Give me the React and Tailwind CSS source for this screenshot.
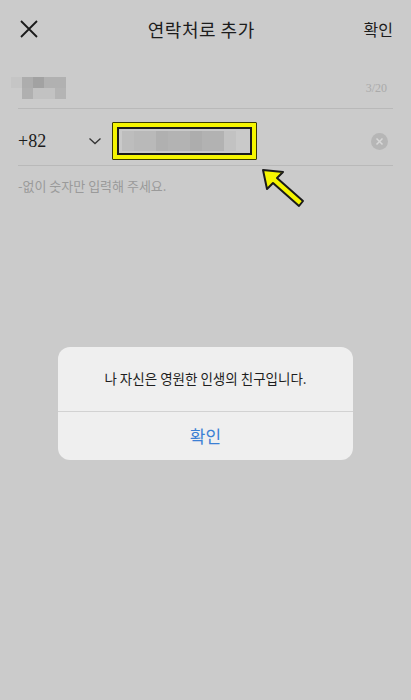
export default function App() {
  const sans = { fontFamily: '"Noto Sans CJK KR", "Noto Sans", sans-serif' };
  const serif = { fontFamily: '"Liberation Serif", "Times New Roman", serif' };

  return (
    <div className="relative min-h-[700px] w-full bg-[#cbcbcb] text-[#1c1c1c]" style={sans}>
      {/* header */}
      <header className="flex h-[58px] items-center justify-between px-[18px]">
        <svg width="20" height="20" viewBox="0 0 20 20" className="ml-[1px]">
          <path d="M2 2 L18 18 M18 2 L2 18" stroke="#1a1a1a" strokeWidth="1.8" />
        </svg>
        <h1 className="text-[18px] font-normal tracking-[0.5px]">연락처로 추가</h1>
        <button className="text-[16px]">확인</button>
      </header>

      {/* name row */}
      <div className="mx-[18px] flex h-[51px] items-center justify-between border-b border-[#b9b9b9] pt-[9px]">
        <div className="-ml-[7px] flex flex-col">
          <div className="flex h-[11px]">
            <span className="w-[11px] bg-[#c5c5c5]" />
            <span className="w-[11px] bg-[#adadad]" />
            <span className="w-[11px] bg-[#a2a2a2]" />
            <span className="w-[22px] bg-[#b1b1b1]" />
          </div>
          <div className="flex h-[11px]">
            <span className="w-[11px]" />
            <span className="w-[11px] bg-[#b0b0b0]" />
            <span className="w-[22px] bg-[#c2c2c2]" />
            <span className="w-[11px] bg-[#b4b4b4]" />
          </div>
        </div>
        <span className="mr-[6px] text-[12px] text-[#aaaaaa]" style={serif}>
          3/20
        </span>
      </div>

      {/* phone row */}
      <div className="mx-[18px] flex h-[57px] items-center border-b border-[#b9b9b9] pt-[8px]">
        <span className="w-[70px] text-[18px]" style={serif}>
          +82
        </span>
        <svg width="14" height="10" viewBox="0 0 14 10">
          <path d="M1.5 2.5 L7 7.5 L12.5 2.5" fill="none" stroke="#333" strokeWidth="1.3" />
        </svg>
        <div className="ml-[10px] h-[38px] w-[145px] rounded-[1px] border border-[#3a3a00] bg-[#f5f500] p-[4px]">
          <div className="flex h-full items-center border-2 border-[#1a1a1a] bg-[#c9c9c9] px-[3px]">
            <div className="flex h-[20px]">
              <span className="w-[12px] bg-[#bdbdbd]" />
              <span className="w-[22px] bg-[#b9b9b9]" />
              <span className="w-[12px] bg-[#b0b0b0]" />
              <span className="w-[22px] bg-[#b3b3b3]" />
              <span className="w-[12px] bg-[#adadad]" />
              <span className="w-[22px] bg-[#b2b2b2]" />
              <span className="w-[12px] bg-[#c2c2c2]" />
            </div>
          </div>
        </div>
        <span className="ml-auto mr-[5px] flex h-[17px] w-[17px] items-center justify-center rounded-full bg-[#b6b6b6]">
          <svg width="9" height="9" viewBox="0 0 9 9">
            <path d="M1.5 1.5 L7.5 7.5 M7.5 1.5 L1.5 7.5" stroke="#d8d8d8" strokeWidth="1.5" />
          </svg>
        </span>
      </div>

      <p className="mx-[18px] mt-[10px] text-[13px] text-[#9a9a9a]">-없이 숫자만 입력해 주세요.</p>

      {/* annotation arrow */}
      <svg className="absolute left-[258px] top-[166px]" width="52" height="44" viewBox="0 0 52 44">
        <path
          d="M5 4 L25 6 L19 12 L45 35 L41 40 L15 17 L9 23 Z"
          fill="#f5f500"
          stroke="#1a1a1a"
          strokeWidth="2"
          strokeLinejoin="round"
        />
      </svg>

      {/* dialog */}
      <div className="mx-auto mt-[151px] w-[295px] overflow-hidden rounded-[12px] bg-[#efefef]">
        <p className="flex h-[64px] items-center justify-center text-[13.5px] text-[#1e1e1e]">
          나 자신은 영원한 인생의 친구입니다.
        </p>
        <div className="border-t border-[#d2d2d2]" />
        <button className="flex h-[48px] w-full items-center justify-center text-[17px] text-[#3b7fd4]">
          확인
        </button>
      </div>
    </div>
  );
}
